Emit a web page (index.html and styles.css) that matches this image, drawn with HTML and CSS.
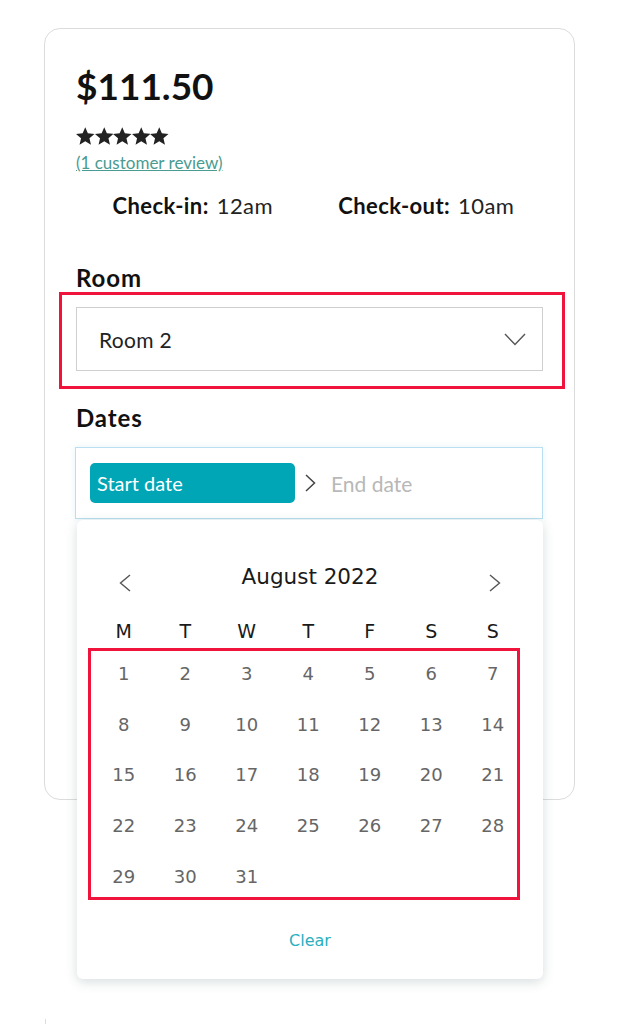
FILE: index.html
```html
<!DOCTYPE html>
<html lang="en">
<head>
  <meta charset="UTF-8" />
  <meta name="viewport" content="width=device-width, initial-scale=1.0" />
  <title>Booking</title>
  <link rel="stylesheet" href="styles.css">
</head>
<body>
  <div class="page">
    <div class="card">
      <h1 class="price">$111.50</h1>

      <div class="stars">
        <svg viewBox="2 2 20 19"><path d="M12 17.27L18.18 21l-1.64-7.03L22 9.24l-7.19-.61L12 2 9.19 8.63 2 9.24l5.46 4.73L5.82 21z"/></svg>
        <svg viewBox="2 2 20 19"><path d="M12 17.27L18.18 21l-1.64-7.03L22 9.24l-7.19-.61L12 2 9.19 8.63 2 9.24l5.46 4.73L5.82 21z"/></svg>
        <svg viewBox="2 2 20 19"><path d="M12 17.27L18.18 21l-1.64-7.03L22 9.24l-7.19-.61L12 2 9.19 8.63 2 9.24l5.46 4.73L5.82 21z"/></svg>
        <svg viewBox="2 2 20 19"><path d="M12 17.27L18.18 21l-1.64-7.03L22 9.24l-7.19-.61L12 2 9.19 8.63 2 9.24l5.46 4.73L5.82 21z"/></svg>
        <svg viewBox="2 2 20 19"><path d="M12 17.27L18.18 21l-1.64-7.03L22 9.24l-7.19-.61L12 2 9.19 8.63 2 9.24l5.46 4.73L5.82 21z"/></svg>
      </div>
      <a class="review-link" href="#">(1 customer review)</a>

      <div class="times">
        <div class="time"><b>Check-in:</b> 12am</div>
        <div class="time"><b>Check-out:</b> 10am</div>
      </div>

      <div class="label">Room</div>
      <div class="highlight room-highlight">
        <div class="select">
          <span>Room 2</span>
          <svg class="select-arrow" viewBox="0 0 22 13"><polyline points="1,1 11,11.5 21,1"/></svg>
        </div>
      </div>

      <div class="label dates-label">Dates</div>
      <div class="date-field">
        <div class="date-start">Start date</div>
        <svg class="range-arrow" viewBox="0 0 11 18"><polyline points="1,1 9.5,9 1,17"/></svg>
        <div class="date-end">End date</div>

        <div class="calendar">
          <div class="cal-header">
            <svg class="cal-nav" viewBox="0 0 12 18"><polyline points="11,1 1.5,9 11,17"/></svg>
            <div class="cal-title">August 2022</div>
            <svg class="cal-nav" viewBox="0 0 12 18"><polyline points="1,1 10.5,9 1,17"/></svg>
          </div>

          <div class="weekdays">
            <span>M</span><span>T</span><span>W</span><span>T</span><span>F</span><span>S</span><span>S</span>
          </div>

          <div class="highlight days">
            <span>1</span><span>2</span><span>3</span><span>4</span><span>5</span><span>6</span><span>7</span>
            <span>8</span><span>9</span><span>10</span><span>11</span><span>12</span><span>13</span><span>14</span>
            <span>15</span><span>16</span><span>17</span><span>18</span><span>19</span><span>20</span><span>21</span>
            <span>22</span><span>23</span><span>24</span><span>25</span><span>26</span><span>27</span><span>28</span>
            <span>29</span><span>30</span><span>31</span>
          </div>

          <div class="cal-clear">Clear</div>
        </div>
      </div>
    </div>

    <div class="card-next"></div>
  </div>
</body>
</html>
```

FILE: styles.css
```css
* {
  box-sizing: border-box;
}
body {
  margin: 0;
  font-family: 'Lato', 'Open Sans', sans-serif;
  color: #111;
  background-color: #ffffff;
}
.page {
  padding: 28px 0 0 44px;
}
.card {
  position: relative;
  width: 531px;
  border: 1px solid #dcdcdc;
  border-radius: 16px;
  padding: 34px 31px 280px 31px;
}
.price {
  margin: 0;
  font-size: 37px;
  line-height: 46px;
  font-weight: 700;
  color: #111;
}
.stars {
  display: flex;
  margin-top: 18px;
  height: 18px;
}
.stars svg {
  width: 18.5px;
  height: 18px;
  fill: #222;
}
.review-link {
  display: inline-block;
  margin-top: 8px;
  font-size: 17px;
  line-height: 20px;
  color: #4a9b92;
  text-decoration: underline;
}
.times {
  display: flex;
  margin-top: 20px;
}
.time {
  flex: 1;
  text-align: center;
  font-size: 22px;
  line-height: 26px;
  letter-spacing: 0.4px;
  color: #222;
}
.time b {
  color: #111;
  margin-right: 2px;
}
.label {
  margin-top: 46px;
  font-size: 24px;
  line-height: 26px;
  letter-spacing: 0.9px;
  font-weight: 700;
  color: #111;
}
.highlight {
  border: 3px solid #f0143c;
}
.room-highlight {
  margin: 1px -22px 0 -17px;
  padding: 12px 19px 15px 14px;
}
.select {
  display: flex;
  align-items: center;
  justify-content: space-between;
  height: 64px;
  border: 1px solid #cfcfcf;
  padding: 0 16px 0 22px;
  font-size: 21px;
  letter-spacing: 0.3px;
  color: #222;
}
.select-arrow {
  width: 22px;
  height: 13px;
  fill: none;
  stroke: #555;
  stroke-width: 1.4;
}
.dates-label {
  margin-top: 16px;
}
.date-field {
  position: relative;
  display: flex;
  align-items: center;
  height: 72px;
  margin-top: 16px;
  margin-left: -1px;
  border: 1px solid #b9dff0;
  padding: 0 14px;
  box-shadow: 0 0 6px rgba(180, 220, 235, 0.35);
}
.date-start {
  width: 205px;
  height: 40px;
  line-height: 40px;
  padding-left: 7px;
  border-radius: 5px;
  background-color: #00a6b6;
  color: #ffffff;
  font-size: 20px;
}
.range-arrow {
  width: 11px;
  height: 18px;
  margin: 0 15px 0 10px;
  fill: none;
  stroke: #444;
  stroke-width: 1.5;
}
.date-end {
  font-size: 21px;
  color: #b8b8b8;
}
.calendar {
  position: absolute;
  top: 100%;
  left: 1px;
  width: 466px;
  margin-top: 2px;
  background-color: #ffffff;
  border-radius: 6px;
  box-shadow: 0 3px 12px rgba(40, 70, 70, 0.18);
  padding: 42px 0 28px 11px;
  font-family: 'DejaVu Sans', 'Open Sans', sans-serif;
}
.cal-header {
  display: flex;
  align-items: center;
  justify-content: space-between;
  padding: 0 42px 0 31px;
}
.cal-title {
  font-size: 21.5px;
  line-height: 26px;
  color: #1a1a1a;
}
.cal-nav {
  width: 12px;
  height: 18px;
  margin-top: 12px;
  fill: none;
  stroke: #555;
  stroke-width: 1.4;
}
.weekdays,
.days {
  display: grid;
  grid-template-columns: repeat(7, 61.5px);
  text-align: center;
}
.weekdays {
  margin-top: 27px;
  padding-left: 5px;
  font-size: 19px;
  line-height: 24px;
  color: #1a1a1a;
}
.days {
  width: 432px;
  margin-top: 5px;
  padding: 2px 0 0 2px;
  row-gap: 9.7px;
  font-size: 18px;
  line-height: 41px;
  color: #666;
}
.cal-clear {
  margin-top: 31px;
  margin-left: -11px;
  text-align: center;
  font-size: 16px;
  line-height: 20px;
  color: #2aafbf;
}
.card-next {
  margin-top: 219px;
  height: 40px;
  border-left: 1px solid #dcdcdc;
  width: 100px;
  margin-left: 1px;
}
```
